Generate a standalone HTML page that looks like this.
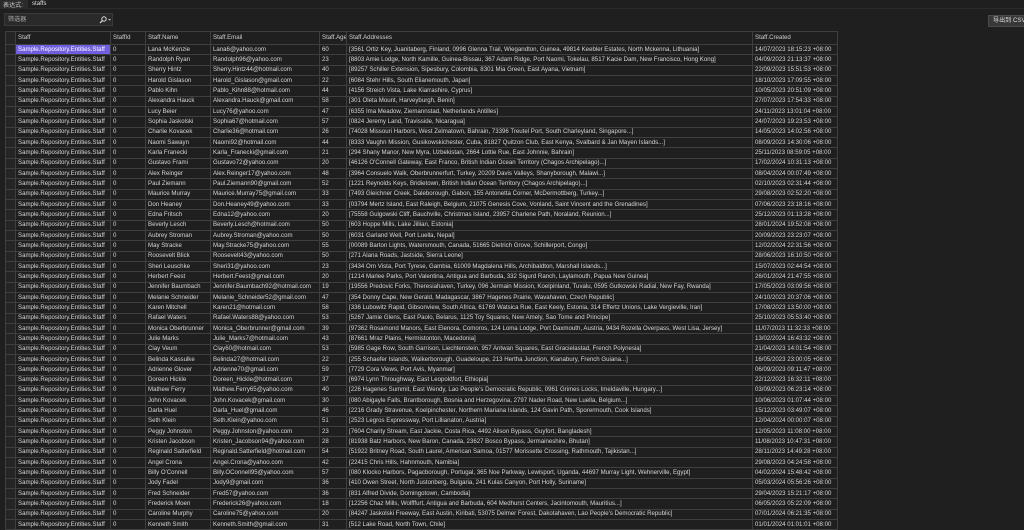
<!DOCTYPE html>
<html><head><meta charset="utf-8"><style>
*{margin:0;padding:0;box-sizing:border-box}
body{width:1024px;height:523px;overflow:hidden;background:#1f1f1f;color:#d6d6d6;font-family:"Liberation Sans","Noto Sans CJK SC",sans-serif;font-size:6.1px;position:relative}
.top{position:absolute;left:0;top:0;width:1024px;height:9px;background:#2b2b2b}
.top .l{position:absolute;left:3px;top:0px;color:#ccc}
.top .v{position:absolute;left:28px;top:0;height:8px;width:996px;background:#1f1f1f;padding-left:4px;line-height:8px;color:#ddd}
.filter{position:absolute;left:4px;top:13px;width:109px;height:13px;background:#2a2a2a;border:1px solid #3a3a3a;color:#aaa;line-height:11px;padding-left:3px}
.filter svg{position:absolute;left:93px;top:2px}
.btn{position:absolute;left:988px;top:15px;width:40px;height:12px;background:#383838;border:1px solid #4a4a4a;color:#ddd;line-height:10px;padding-left:4px;white-space:nowrap;overflow:hidden}
table{position:absolute;left:5px;top:31px;border-collapse:collapse;table-layout:fixed;width:832px}
td,th{border:1px solid #3f3f3f;white-space:nowrap;overflow:hidden;padding:0 2px;text-align:left;font-weight:normal;height:10.34px;line-height:8px}
th{height:13px;color:#cfcfcf}
td.h,th.h{background:#252526;padding:0}
td.sel{background:#6f5fe0;color:#fff}
</style></head><body>
<div class="top"><span class="l">表达式:</span><span class="v">staffs</span></div>
<div class="filter">筛选器<svg width="14" height="8" viewBox="0 0 14 8"><circle cx="6" cy="3" r="2.2" fill="none" stroke="#ddd" stroke-width="1"/><line x1="4.5" y1="4.5" x2="2" y2="7" stroke="#ddd" stroke-width="1.2"/><path d="M10 3l1.5 1.5L13 3z" fill="#ccc"/></svg></div>
<div class="btn">导出到 CSV</div>
<table>
<colgroup><col style="width:10px"><col style="width:95px"><col style="width:35px"><col style="width:65px"><col style="width:109px"><col style="width:27px"><col style="width:406px"><col style="width:85px"></colgroup>
<tr><th class="h"></th><th>Staff</th><th>StaffId</th><th>Staff.Name</th><th>Staff.Email</th><th>Staff.Age</th><th>Staff.Addresses</th><th>Staff.Created</th></tr>
<tr><td class="h"></td><td class="sel">Sample.Repository.Entities.Staff</td><td>0</td><td>Lana McKenzie</td><td>Lana6@yahoo.com</td><td>60</td><td>[3561 Ortiz Key, Juanitaberg, Finland, 0996 Glenna Trail, Wiegandton, Guinea, 49814 Keebler Estates, North Mckenna, Lithuania]</td><td>14/07/2023 18:15:23 +08:00</td></tr>
<tr><td class="h"></td><td>Sample.Repository.Entities.Staff</td><td>0</td><td>Randolph Ryan</td><td>Randolph96@yahoo.com</td><td>23</td><td>[8803 Amie Lodge, North Kamille, Guinea-Bissau, 367 Adam Ridge, Port Naomi, Tokelau, 8517 Kacie Dam, New Francisco, Hong Kong]</td><td>04/09/2023 21:13:37 +08:00</td></tr>
<tr><td class="h"></td><td>Sample.Repository.Entities.Staff</td><td>0</td><td>Sherry Hintz</td><td>Sherry.Hintz44@hotmail.com</td><td>40</td><td>[89257 Schiller Extension, Sipesbury, Colombia, 8301 Mia Green, East Ayana, Vietnam]</td><td>22/09/2023 15:51:53 +08:00</td></tr>
<tr><td class="h"></td><td>Sample.Repository.Entities.Staff</td><td>0</td><td>Harold Gislason</td><td>Harold_Gislason@gmail.com</td><td>22</td><td>[6084 Stehr Hills, South Elianemouth, Japan]</td><td>18/10/2023 17:09:55 +08:00</td></tr>
<tr><td class="h"></td><td>Sample.Repository.Entities.Staff</td><td>0</td><td>Pablo Kihn</td><td>Pablo_Kihn88@hotmail.com</td><td>44</td><td>[4156 Streich Vista, Lake Kiarrashire, Cyprus]</td><td>10/05/2023 20:51:09 +08:00</td></tr>
<tr><td class="h"></td><td>Sample.Repository.Entities.Staff</td><td>0</td><td>Alexandra Hauck</td><td>Alexandra.Hauck@gmail.com</td><td>58</td><td>[301 Oleta Mount, Harveyburgh, Benin]</td><td>27/07/2023 17:54:33 +08:00</td></tr>
<tr><td class="h"></td><td>Sample.Repository.Entities.Staff</td><td>0</td><td>Lucy Beier</td><td>Lucy76@yahoo.com</td><td>47</td><td>[6355 Ima Meadow, Ziemannstad, Netherlands Antilles]</td><td>24/11/2023 13:01:04 +08:00</td></tr>
<tr><td class="h"></td><td>Sample.Repository.Entities.Staff</td><td>0</td><td>Sophia Jaskolski</td><td>Sophia67@hotmail.com</td><td>57</td><td>[0824 Jeremy Land, Travisside, Nicaragua]</td><td>24/07/2023 19:23:53 +08:00</td></tr>
<tr><td class="h"></td><td>Sample.Repository.Entities.Staff</td><td>0</td><td>Charlie Kovacek</td><td>Charlie36@hotmail.com</td><td>26</td><td>[74028 Missouri Harbors, West Zelmatown, Bahrain, 73396 Treutel Port, South Charleyland, Singapore...]</td><td>14/05/2023 14:02:56 +08:00</td></tr>
<tr><td class="h"></td><td>Sample.Repository.Entities.Staff</td><td>0</td><td>Naomi Sawayn</td><td>Naomi92@hotmail.com</td><td>44</td><td>[8333 Vaughn Mission, Gusikowskichester, Cuba, 81827 Quitzon Club, East Kenya, Svalbard &amp; Jan Mayen Islands...]</td><td>08/09/2023 14:30:06 +08:00</td></tr>
<tr><td class="h"></td><td>Sample.Repository.Entities.Staff</td><td>0</td><td>Karla Franecki</td><td>Karla_Franecki@gmail.com</td><td>21</td><td>[294 Shany Manor, New Myra, Uzbekistan, 2664 Lottie Rue, East Johnnie, Bahrain]</td><td>25/11/2023 08:59:05 +08:00</td></tr>
<tr><td class="h"></td><td>Sample.Repository.Entities.Staff</td><td>0</td><td>Gustavo Frami</td><td>Gustavo72@yahoo.com</td><td>20</td><td>[46126 O'Connell Gateway, East Franco, British Indian Ocean Territory (Chagos Archipelago)...]</td><td>17/02/2024 10:31:13 +08:00</td></tr>
<tr><td class="h"></td><td>Sample.Repository.Entities.Staff</td><td>0</td><td>Alex Reinger</td><td>Alex.Reinger17@yahoo.com</td><td>48</td><td>[3964 Consuelo Walk, Oberbrunnerfurt, Turkey, 20209 Davis Valleys, Shanyborough, Malawi...]</td><td>08/04/2024 00:07:49 +08:00</td></tr>
<tr><td class="h"></td><td>Sample.Repository.Entities.Staff</td><td>0</td><td>Paul Ziemann</td><td>Paul.Ziemann90@gmail.com</td><td>52</td><td>[1221 Reynolds Keys, Bridietown, British Indian Ocean Territory (Chagos Archipelago)...]</td><td>02/10/2023 02:31:44 +08:00</td></tr>
<tr><td class="h"></td><td>Sample.Repository.Entities.Staff</td><td>0</td><td>Maurice Murray</td><td>Maurice.Murray75@gmail.com</td><td>33</td><td>[7493 Gleichner Creek, Daleborough, Gabon, 155 Antonetta Corner, McDermottberg, Turkey...]</td><td>29/08/2023 02:52:20 +08:00</td></tr>
<tr><td class="h"></td><td>Sample.Repository.Entities.Staff</td><td>0</td><td>Don Heaney</td><td>Don.Heaney49@yahoo.com</td><td>33</td><td>[03794 Mertz Island, East Raleigh, Belgium, 21075 Genesis Cove, Vonland, Saint Vincent and the Grenadines]</td><td>07/06/2023 23:18:16 +08:00</td></tr>
<tr><td class="h"></td><td>Sample.Repository.Entities.Staff</td><td>0</td><td>Edna Fritsch</td><td>Edna12@yahoo.com</td><td>20</td><td>[75558 Gulgowski Cliff, Bauchville, Christmas Island, 23957 Charlene Path, Noraland, Reunion...]</td><td>25/12/2023 01:13:28 +08:00</td></tr>
<tr><td class="h"></td><td>Sample.Repository.Entities.Staff</td><td>0</td><td>Beverly Lesch</td><td>Beverly.Lesch@hotmail.com</td><td>50</td><td>[603 Hoppe Mills, Lake Jillian, Estonia]</td><td>28/01/2024 19:52:08 +08:00</td></tr>
<tr><td class="h"></td><td>Sample.Repository.Entities.Staff</td><td>0</td><td>Aubrey Stroman</td><td>Aubrey.Stroman@yahoo.com</td><td>50</td><td>[6031 Garland Well, Port Luella, Nepal]</td><td>20/09/2023 23:23:07 +08:00</td></tr>
<tr><td class="h"></td><td>Sample.Repository.Entities.Staff</td><td>0</td><td>May Stracke</td><td>May.Stracke75@yahoo.com</td><td>55</td><td>[00089 Barton Lights, Watersmouth, Canada, 51665 Dietrich Grove, Schillerport, Congo]</td><td>12/02/2024 22:31:56 +08:00</td></tr>
<tr><td class="h"></td><td>Sample.Repository.Entities.Staff</td><td>0</td><td>Roosevelt Blick</td><td>Roosevelt43@yahoo.com</td><td>50</td><td>[271 Alana Roads, Jastside, Sierra Leone]</td><td>28/06/2023 16:10:50 +08:00</td></tr>
<tr><td class="h"></td><td>Sample.Repository.Entities.Staff</td><td>0</td><td>Sheri Leuschke</td><td>Sheri31@yahoo.com</td><td>23</td><td>[3434 Orn Vista, Port Tyrese, Gambia, 61009 Magdalena Hills, Archibaldton, Marshall Islands...]</td><td>15/07/2023 02:44:54 +08:00</td></tr>
<tr><td class="h"></td><td>Sample.Repository.Entities.Staff</td><td>0</td><td>Herbert Feest</td><td>Herbert.Feest@gmail.com</td><td>20</td><td>[1214 Marlee Parks, Port Valentina, Antigua and Barbuda, 332 Sigurd Ranch, Laylamouth, Papua New Guinea]</td><td>26/01/2024 21:47:55 +08:00</td></tr>
<tr><td class="h"></td><td>Sample.Repository.Entities.Staff</td><td>0</td><td>Jennifer Baumbach</td><td>Jennifer.Baumbach92@hotmail.com</td><td>19</td><td>[19556 Predovic Forks, Theresiahaven, Turkey, 096 Jermain Mission, Koelpinland, Tuvalu, 0595 Gutkowski Radial, New Fay, Rwanda]</td><td>17/05/2023 03:09:56 +08:00</td></tr>
<tr><td class="h"></td><td>Sample.Repository.Entities.Staff</td><td>0</td><td>Melanie Schneider</td><td>Melanie_Schneider52@gmail.com</td><td>47</td><td>[354 Donny Cape, New Gerald, Madagascar, 3867 Hagenes Prairie, Wavahaven, Czech Republic]</td><td>24/10/2023 20:37:06 +08:00</td></tr>
<tr><td class="h"></td><td>Sample.Repository.Entities.Staff</td><td>0</td><td>Karen Mitchell</td><td>Karen21@hotmail.com</td><td>58</td><td>[336 Lubowitz Rapid, Gibsonview, South Africa, 61769 Watsica Rue, East Keely, Estonia, 314 Effertz Unions, Lake Vergieville, Iran]</td><td>17/08/2023 13:50:00 +08:00</td></tr>
<tr><td class="h"></td><td>Sample.Repository.Entities.Staff</td><td>0</td><td>Rafael Waters</td><td>Rafael.Waters88@yahoo.com</td><td>53</td><td>[5267 Jamie Glens, East Paolo, Belarus, 1125 Toy Squares, New Amely, Sao Tome and Principe]</td><td>25/10/2023 05:53:40 +08:00</td></tr>
<tr><td class="h"></td><td>Sample.Repository.Entities.Staff</td><td>0</td><td>Monica Oberbrunner</td><td>Monica_Oberbrunner@gmail.com</td><td>39</td><td>[97362 Rosamond Manors, East Elenora, Comoros, 124 Loma Lodge, Port Daxmouth, Austria, 9434 Rozella Overpass, West Lisa, Jersey]</td><td>11/07/2023 11:32:33 +08:00</td></tr>
<tr><td class="h"></td><td>Sample.Repository.Entities.Staff</td><td>0</td><td>Julie Marks</td><td>Julie_Marks7@hotmail.com</td><td>43</td><td>[87661 Mraz Plains, Hermistonton, Macedonia]</td><td>13/02/2024 16:43:32 +08:00</td></tr>
<tr><td class="h"></td><td>Sample.Repository.Entities.Staff</td><td>0</td><td>Clay Veum</td><td>Clay60@hotmail.com</td><td>53</td><td>[5985 Gage Row, South Garrison, Liechtenstein, 957 Antwan Squares, East Gracielastad, French Polynesia]</td><td>21/04/2023 14:01:54 +08:00</td></tr>
<tr><td class="h"></td><td>Sample.Repository.Entities.Staff</td><td>0</td><td>Belinda Kassulke</td><td>Belinda27@hotmail.com</td><td>22</td><td>[255 Schaefer Islands, Walkerborough, Guadeloupe, 213 Hertha Junction, Kianabury, French Guiana...]</td><td>16/05/2023 23:00:05 +08:00</td></tr>
<tr><td class="h"></td><td>Sample.Repository.Entities.Staff</td><td>0</td><td>Adrienne Glover</td><td>Adrienne70@gmail.com</td><td>59</td><td>[7729 Cora Views, Port Avis, Myanmar]</td><td>06/09/2023 09:11:47 +08:00</td></tr>
<tr><td class="h"></td><td>Sample.Repository.Entities.Staff</td><td>0</td><td>Doreen Hickle</td><td>Doreen_Hickle@hotmail.com</td><td>37</td><td>[6974 Lynn Throughway, East Leopoldfort, Ethiopia]</td><td>22/12/2023 16:32:11 +08:00</td></tr>
<tr><td class="h"></td><td>Sample.Repository.Entities.Staff</td><td>0</td><td>Mathew Ferry</td><td>Mathew.Ferry65@yahoo.com</td><td>40</td><td>[226 Hagenes Summit, East Wendy, Lao People's Democratic Republic, 0961 Grimes Locks, Imeldaville, Hungary...]</td><td>03/09/2023 06:23:14 +08:00</td></tr>
<tr><td class="h"></td><td>Sample.Repository.Entities.Staff</td><td>0</td><td>John Kovacek</td><td>John.Kovacek@gmail.com</td><td>30</td><td>[080 Abigayle Falls, Brantborough, Bosnia and Herzegovina, 2797 Nader Road, New Luella, Belgium...]</td><td>10/06/2023 01:07:44 +08:00</td></tr>
<tr><td class="h"></td><td>Sample.Repository.Entities.Staff</td><td>0</td><td>Darla Huel</td><td>Darla_Huel@gmail.com</td><td>46</td><td>[2216 Grady Stravenue, Koelpinchester, Northern Mariana Islands, 124 Gavin Path, Sporermouth, Cook Islands]</td><td>15/12/2023 03:49:07 +08:00</td></tr>
<tr><td class="h"></td><td>Sample.Repository.Entities.Staff</td><td>0</td><td>Seth Klein</td><td>Seth.Klein@yahoo.com</td><td>51</td><td>[2523 Legros Expressway, Port Lillianaton, Austria]</td><td>12/04/2024 00:00:07 +08:00</td></tr>
<tr><td class="h"></td><td>Sample.Repository.Entities.Staff</td><td>0</td><td>Peggy Johnston</td><td>Peggy.Johnston@yahoo.com</td><td>23</td><td>[7604 Charity Stream, East Jackie, Costa Rica, 4492 Alison Bypass, Guyfort, Bangladesh]</td><td>12/05/2023 11:08:00 +08:00</td></tr>
<tr><td class="h"></td><td>Sample.Repository.Entities.Staff</td><td>0</td><td>Kristen Jacobson</td><td>Kristen_Jacobson94@yahoo.com</td><td>28</td><td>[81938 Batz Harbors, New Baron, Canada, 23627 Bosco Bypass, Jermaineshire, Bhutan]</td><td>11/08/2023 10:47:31 +08:00</td></tr>
<tr><td class="h"></td><td>Sample.Repository.Entities.Staff</td><td>0</td><td>Reginald Satterfield</td><td>Reginald.Satterfield@hotmail.com</td><td>54</td><td>[51922 Britney Road, South Laurel, American Samoa, 01577 Morissette Crossing, Rathmouth, Tajikistan...]</td><td>28/11/2023 14:49:28 +08:00</td></tr>
<tr><td class="h"></td><td>Sample.Repository.Entities.Staff</td><td>0</td><td>Angel Crona</td><td>Angel.Crona@yahoo.com</td><td>42</td><td>[22415 Chris Hills, Hahnmouth, Namibia]</td><td>29/08/2023 04:24:58 +08:00</td></tr>
<tr><td class="h"></td><td>Sample.Repository.Entities.Staff</td><td>0</td><td>Billy O'Connell</td><td>Billy.OConnell95@yahoo.com</td><td>57</td><td>[080 Klocko Harbors, Pagacborough, Portugal, 365 Noe Parkway, Lewisport, Uganda, 44697 Murray Light, Wehnerville, Egypt]</td><td>04/02/2024 15:48:42 +08:00</td></tr>
<tr><td class="h"></td><td>Sample.Repository.Entities.Staff</td><td>0</td><td>Jody Fadel</td><td>Jody9@gmail.com</td><td>36</td><td>[410 Owen Street, North Justonberg, Bulgaria, 241 Kulas Canyon, Port Holly, Suriname]</td><td>05/03/2024 05:56:26 +08:00</td></tr>
<tr><td class="h"></td><td>Sample.Repository.Entities.Staff</td><td>0</td><td>Fred Schneider</td><td>Fred57@yahoo.com</td><td>36</td><td>[831 Alfred Divide, Domingotown, Cambodia]</td><td>29/04/2023 15:21:17 +08:00</td></tr>
<tr><td class="h"></td><td>Sample.Repository.Entities.Staff</td><td>0</td><td>Frederick Moen</td><td>Frederick26@yahoo.com</td><td>18</td><td>[12256 Chaz Mills, Wolfffurt, Antigua and Barbuda, 604 Medhurst Centers, Jacintomouth, Mauritius...]</td><td>06/05/2023 05:22:09 +08:00</td></tr>
<tr><td class="h"></td><td>Sample.Repository.Entities.Staff</td><td>0</td><td>Caroline Murphy</td><td>Caroline75@yahoo.com</td><td>20</td><td>[84247 Jaskolski Freeway, East Austin, Kiribati, 53075 Delmer Forest, Dakotahaven, Lao People's Democratic Republic]</td><td>07/01/2024 06:21:35 +08:00</td></tr>
<tr><td class="h"></td><td>Sample.Repository.Entities.Staff</td><td>0</td><td>Kenneth Smith</td><td>Kenneth.Smith@gmail.com</td><td>31</td><td>[512 Lake Road, North Town, Chile]</td><td>01/01/2024 01:01:01 +08:00</td></tr>
</table>
</body></html>
